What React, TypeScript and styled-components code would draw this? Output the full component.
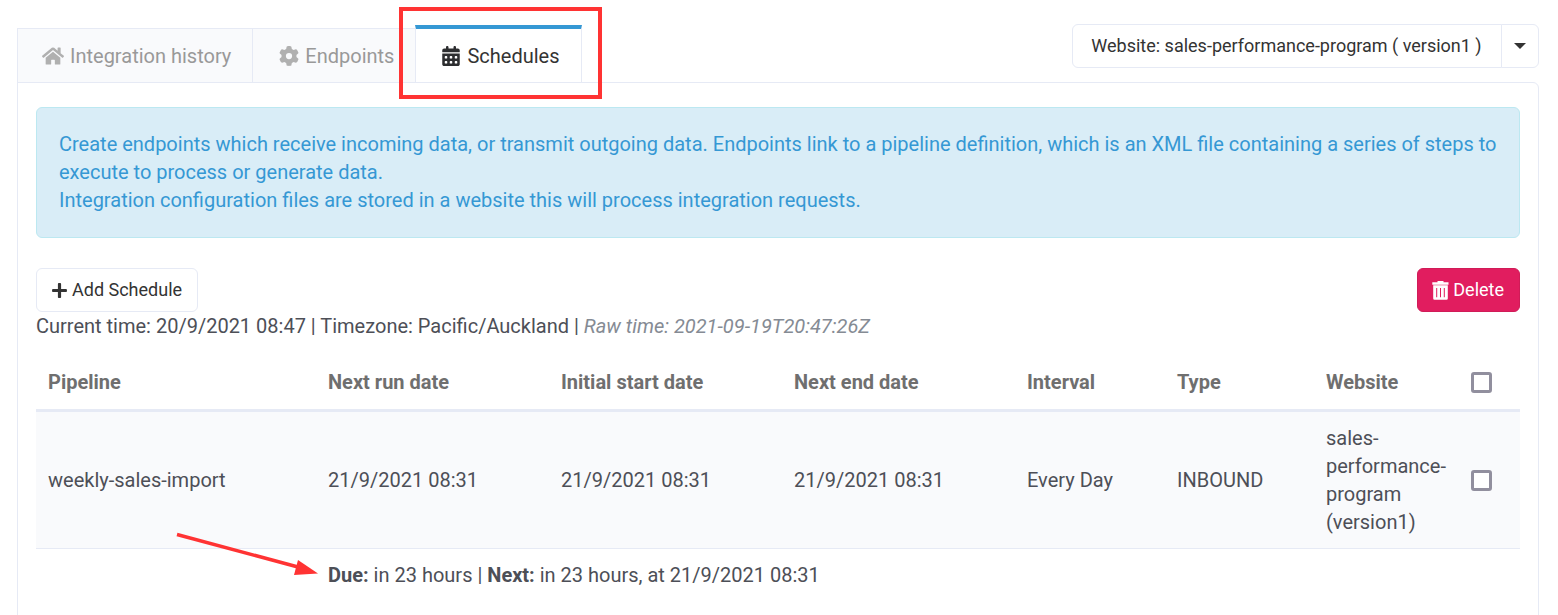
import React from "react";
import styled, { createGlobalStyle, css } from "styled-components";
import { FaHome, FaPlus } from "react-icons/fa";
import { FaCalendarDays, FaGear } from "react-icons/fa6";

const GlobalStyle = createGlobalStyle`
  *, *::before, *::after { box-sizing: border-box; }
  body {
    margin: 0;
    background: #fff;
    color: #4d4f57;
    font-family: Roboto, "Liberation Sans", sans-serif;
    font-size: 20px;
    line-height: 28px;
    overflow-x: hidden;
  }
  button, input { font: inherit; }
`;

const line = "#e6eaf5";
const shade = "#f9fafc";

const Page = styled.main`
  position: relative;
  padding: 24px 19px 0 17px;
`;

const TopBar = styled.header`
  display: flex;
  justify-content: space-between;
  align-items: flex-start;
`;

const Tabs = styled.nav`
  display: flex;
  align-items: flex-end;
  height: 59px;
  margin-bottom: -1px;
`;

const Tab = styled.a<{ $active?: boolean }>`
  display: flex;
  align-items: center;
  gap: 6px;
  height: 55px;
  padding: 0 21px 0 26px;
  border: 1px solid ${line};
  border-right: 0;
  background: ${shade};
  color: #999;
  text-decoration: none;
  white-space: nowrap;

  &:first-child { padding-left: 24px; }
  svg { color: #b0b0b0; }

  ${(p) =>
    p.$active &&
    css`
      height: 58px;
      padding-left: 25px;
      border-right: 1px solid ${line};
      border-top: 4px solid #3598d4;
      background: #fff;
      color: #333;
      svg { color: #2c2d2f; }
    `}
`;

const SplitButton = styled.div`
  display: flex;
`;

const Button = styled.button<{ $danger?: boolean }>`
  display: inline-flex;
  align-items: center;
  justify-content: center;
  gap: 4px;
  height: 44px;
  padding: 0 15px 0 14px;
  border: 1px solid ${(p) => (p.$danger ? "#d01c58" : line)};
  border-radius: 6px;
  background: ${(p) => (p.$danger ? "#e11d5f" : "#fff")};
  color: ${(p) => (p.$danger ? "#fff" : "#333")};
  font-size: 18px;
  white-space: nowrap;

  ${SplitButton} &:first-child {
    min-width: 430px;
    border-radius: 6px 0 0 6px;
  }
  ${SplitButton} &:last-child {
    width: 38px;
    margin-left: -1px;
    padding: 0;
    border-radius: 0 6px 6px 0;
  }
`;

const Caret = styled.span`
  border: 6px solid transparent;
  border-top-color: #333;
  border-bottom: 0;
`;

const Panel = styled.section`
  min-height: 560px;
  padding: 24px 18px;
  border: 1px solid ${line};
  border-radius: 0 6px 0 0;
`;

const Notice = styled.p`
  margin: 0 0 30px;
  padding: 22px 22px 23px;
  border: 1px solid #bce8f1;
  border-radius: 6px;
  background: #d9edf7;
  color: #3598d4;
`;

const Actions = styled.div`
  display: flex;
  justify-content: space-between;
`;

const Times = styled.p`
  margin: 0 0 16px;
  em { color: #858b94; }
`;

const Table = styled.table`
  width: 100%;
  table-layout: fixed;
  border-collapse: separate;
  border-spacing: 0;
`;

const Th = styled.th`
  padding: 12px 12px 13px;
  border-bottom: 3px solid ${line};
  color: #6f6f6f;
  font-weight: 700;
  text-align: left;
`;

const Td = styled.td<{ $plain?: boolean }>`
  padding: 12px;
  border-bottom: ${(p) => (p.$plain ? "0" : `1px solid ${line}`)};
  background: ${(p) => (p.$plain ? "#fff" : shade)};
`;

const Checkbox = styled.input`
  display: block;
  appearance: none;
  width: 21px;
  height: 21px;
  margin: 0;
  border: 3px solid #918f9e;
  border-radius: 3px;
  background: #fff;
  &:checked { background: #3598d4; }
`;

const Highlight = styled.div`
  position: absolute;
  left: 399px;
  top: 7px;
  width: 203px;
  height: 92px;
  border: 4px solid #ff3333;
  pointer-events: none;
`;

const Arrow = styled.svg`
  position: absolute;
  left: 170px;
  top: 528px;
  pointer-events: none;
`;

const TrashIcon = () => (
  <svg width="17" height="19" viewBox="0 0 17 19" fill="currentColor" aria-hidden="true">
    <path d="M5.5 0h6v1.2h5v2.600H.3V1.200h5.200zM1.200 4.300h14.600v13.200a1.300 1.300 0 0 1-1.300 1.300h-12a1.300 1.300 0 0 1-1.300-1.300zM4.200 7v9.200h1V7zM8 7v9.200h1V7zM11.800 7v9.200h1V7z" fillRule="evenodd" />
  </svg>
);

const columns = [
  { title: "Pipeline", width: 280 },
  { title: "Next run date", width: 233 },
  { title: "Initial start date", width: 233 },
  { title: "Next end date", width: 233 },
  { title: "Interval", width: 150 },
  { title: "Type", width: 149 },
  { title: "Website", width: 145 },
];

const schedule = [
  "weekly-sales-import",
  "21/9/2021 08:31",
  "21/9/2021 08:31",
  "21/9/2021 08:31",
  "Every Day",
  "INBOUND",
  "sales-performance-program (version1)",
];

export default function App() {
  return (
    <>
      <GlobalStyle />
      <Page>
        <TopBar>
          <Tabs>
            <Tab href="#history"><FaHome size={22} />Integration history</Tab>
            <Tab href="#endpoints"><FaGear size={20} />Endpoints</Tab>
            <Tab href="#schedules" $active aria-current="page"><FaCalendarDays size={20} />Schedules</Tab>
          </Tabs>
          <SplitButton>
            <Button type="button">Website: sales-performance-program ( version1 )</Button>
            <Button type="button" aria-label="Choose website"><Caret /></Button>
          </SplitButton>
        </TopBar>
        <Panel>
          <Notice>
            Create endpoints which receive incoming data, or transmit outgoing data. Endpoints link to a pipeline definition, which is an XML file containing a series of steps to execute to process or generate data.
            <br />
            Integration configuration files are stored in a website this will process integration requests.
          </Notice>
          <Actions>
            <Button type="button"><FaPlus size={17} />Add Schedule</Button>
            <Button type="button" $danger><TrashIcon />Delete</Button>
          </Actions>
          <Times>
            Current time: 20/9/2021 08:47 | Timezone: Pacific/Auckland | <em>Raw time: 2021-09-19T20:47:26Z</em>
          </Times>
          <Table>
            <colgroup>
              {columns.map((c) => <col key={c.title} width={c.width} />)}
              <col width={61} />
            </colgroup>
            <thead>
              <tr>
                {columns.map((c) => <Th key={c.title} scope="col">{c.title}</Th>)}
                <Th scope="col"><Checkbox type="checkbox" aria-label="Select all schedules" /></Th>
              </tr>
            </thead>
            <tbody>
              <tr>
                {schedule.map((value, i) => <Td key={i}>{value}</Td>)}
                <Td><Checkbox type="checkbox" aria-label="Select weekly-sales-import" /></Td>
              </tr>
              <tr>
                <Td $plain />
                <Td $plain colSpan={7}>
                  <b>Due:</b> in 23 hours | <b>Next:</b> in 23 hours, at 21/9/2021 08:31
                </Td>
              </tr>
            </tbody>
          </Table>
        </Panel>
        <Highlight />
        <Arrow width="150" height="50" viewBox="0 0 150 50" aria-hidden="true">
          <path d="M7 6.500L128 39" stroke="#ff3333" strokeWidth="3.500" />
          <path d="M128 32L148 45.500L124 47z" fill="#ff3333" />
        </Arrow>
      </Page>
    </>
  );
}
